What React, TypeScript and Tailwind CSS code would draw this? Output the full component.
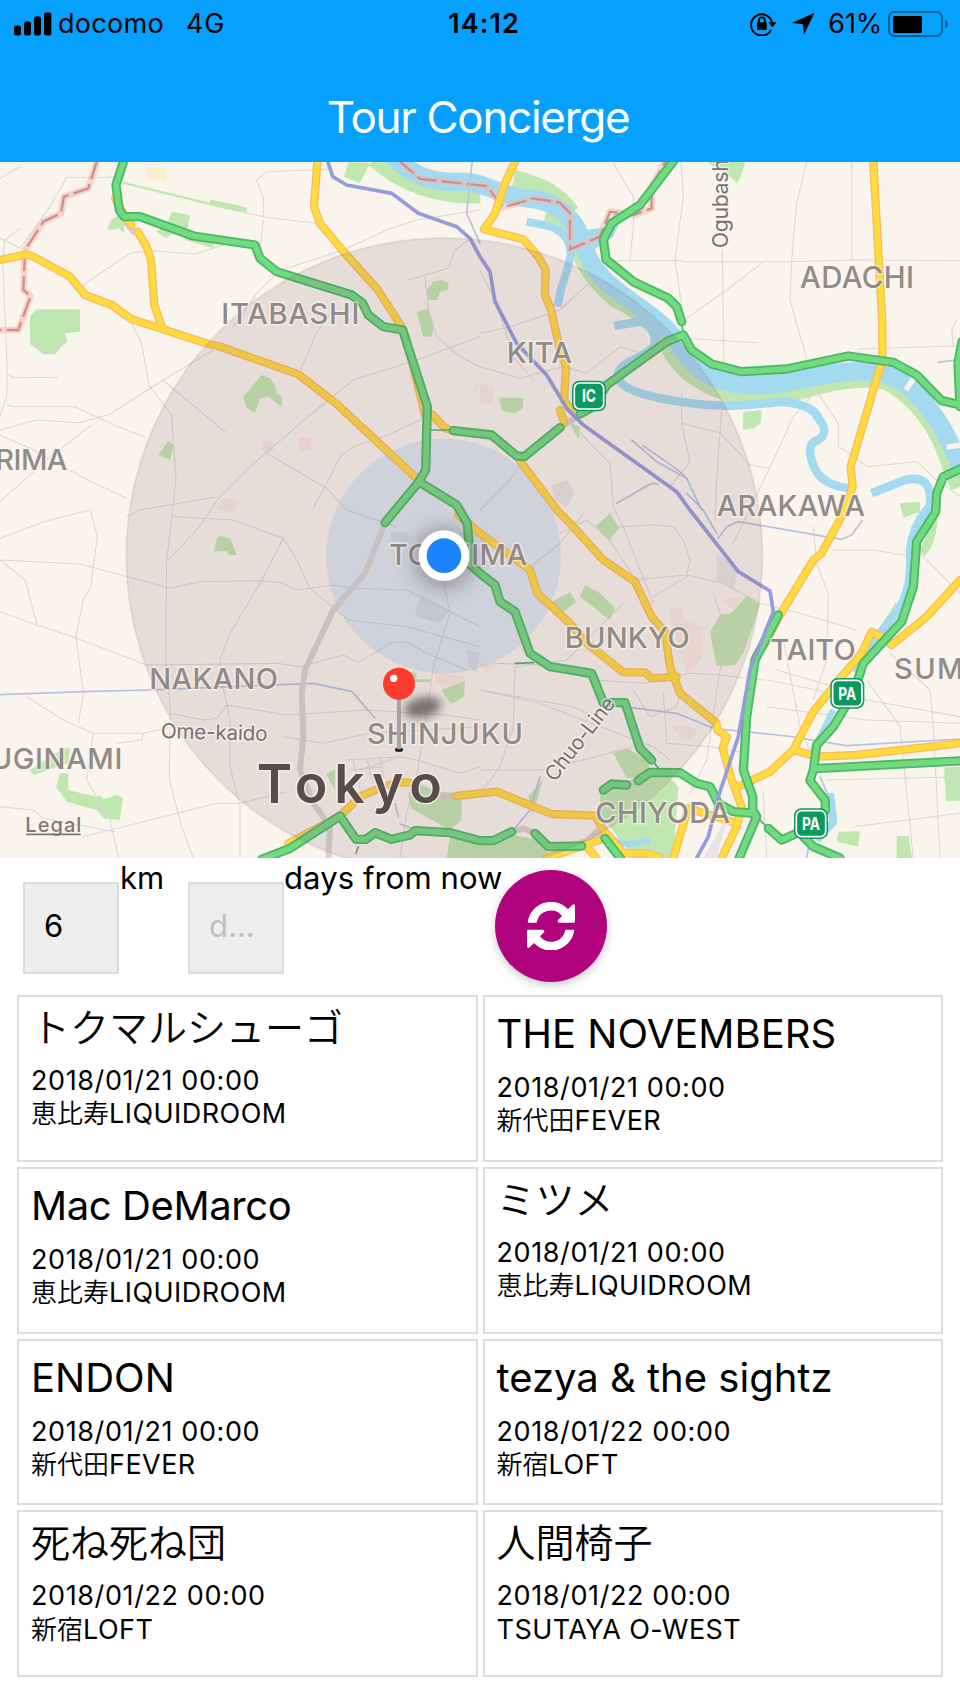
import React from "react";

const FONT = "font-[Inter,'Noto_Sans_CJK_JP',sans-serif]";

/* ---------- map geometry (three units per pixel) ---------- */

const localRoads = [
  "0,55 60,20", "0,235 60,265 150,140 200,52 350,52", "8,300 15,240 60,205", "8,300 22,640 20,710 0,770",
  "20,640 40,653 172,652", "20,735 45,740 225,740 330,790 435,832", "0,810 110,780 240,788 330,762 490,660 640,570",
  "0,1025 145,895 275,795", "0,825 90,865 180,915 275,965 380,1015", "250,375 390,280 455,272 585,282 680,252",
  "390,480 425,550 447,675 515,765 528,960 518,1050 500,1200 497,1500 510,1640 508,1860 545,2000 580,2094",
  "488,660 678,818", "860,325 1030,270 1160,210 1250,180 1440,150", "790,180 782,255", "790,170 790,115 770,60 800,35 1000,28",
  "590,125 800,172 950,190", "820,350 770,400 700,500", "900,635 950,515 1010,440", "660,1010 750,920 930,765 1060,660 1250,600 1440,530",
  "1225,360 1345,325 1365,270 1405,240", "1275,350 1285,450 1310,530 1380,590 1440,620", "1280,770 1175,820 1060,860 1020,890 980,970 940,1045",
  "800,880 980,985 1040,1050 1190,1100", "660,1010 590,1110 505,1200", "650,1010 420,1050 380,1070", "270,1050 292,1130 272,1280 250,1320 228,1430 250,1600 235,1690",
  "0,1135 130,1085 270,1050", "0,1200 240,1212 510,1285 600,1265 780,1262 845,1268 890,1290 1000,1275 1060,1285 1220,1290 1440,1400",
  "0,1355 110,1395 230,1435 440,1515 830,1510 900,1520 1030,1485 1075,1508 1170,1450 1220,1445 1280,1480 1400,1530", "110,1390 75,1260 0,1200",
  "850,1135 780,1270 690,1420 660,1500 665,1560 690,1680 690,1820 720,1940 720,2094", "520,1070 700,1080 850,1135 890,1200 930,1285 1045,1380 1220,1400 1440,1460",
  "80,1610 190,1680 280,1720 430,1720 520,1700", "510,1660 610,1680 650,1675 680,1635 860,1665 1100,1650 1340,1665 1440,1680",
  "280,1720 260,1860 330,1980 355,2094", "0,1940 100,1950 130,1975 345,2015", "250,2030 430,1985 650,1930 720,1930 860,1895", "430,1720 425,1740 350,1750",
  "850,1730 970,1750 1110,1720 1440,1700", "1330,1260 1350,1360 1300,1520 1280,1660 1250,1850 1220,1960 1200,2094", "1080,1830 1200,1790 1250,1800 1380,1840 1440,1820",
  "1060,1800 1080,1890", "1100,1795 1120,1870", "1140,1790 1150,1850", "1040,1800 1200,1790", "1050,1830 1150,1820",
  "1440,520 1530,500 1680,450 1830,310 1860,302 2040,302 2060,305 2370,305 2560,300 2880,302", "1838,6 1900,110 1900,200 1890,300", "2043,6 2050,110 2025,300 2050,470",
  "2420,6 2390,130 2375,300 2370,420 2410,560 2440,680 2515,790 2515,860 2555,885", "2555,6 2555,300", "2167,270 2172,650 2160,820 2150,960 2145,1080",
  "2060,475 2180,390 2285,310", "2050,535 2270,548", "2575,567 2860,558 2880,560", "2870,480 2855,510 2860,555", "2045,790 2160,818 2250,915 2305,925",
  "2045,700 2045,790 2070,905 2010,980 2070,1050", "2440,700 2380,770 2320,900 2200,1150", "2555,885 2600,920 2750,905 2810,960 2880,1010",
  "1440,620 1560,655 1690,620 1760,640 1860,560 1960,590", "1440,330 1490,430 1540,590 1600,660", "1700,770 1770,850 1830,910 1840,1040 1870,1100 1920,1230 1960,1330",
  "1440,1050 1530,960 1570,900", "1580,1230 1680,1150 1750,1060", "1680,1120 1760,1080 1830,1140 1900,1250", "1860,1100 1960,1095 2020,1100 2050,1140 2070,1200 2060,1250 1960,1310",
  "1900,1260 2060,1245 2170,1270 2280,1330 2400,1360 2570,1410", "2140,1300 2180,1420 2155,1560 2120,1800 2070,1900", "1550,1520 1700,1500 1800,1400 1870,1330",
  "1440,1590 1620,1630 1800,1700 1960,1760 2010,1800", "1480,1510 1640,1515 1780,1560 1930,1570 2070,1540 2160,1545 2290,1560", "1545,1520 1540,1700 1500,1820 1440,1900", "1440,1830 1620,1830 1750,1800 1900,1760",
  "2300,1560 2600,1620 2880,1670", "2300,1640 2600,1680 2880,1690", "2440,1100 2450,1210 2485,1300 2480,1500 2440,1620", "2500,1170 2620,1170 2740,1190", "2600,1560 2700,1700 2720,1900 2740,2094",
  "2670,1480 2790,1590 2800,1700 2820,2094", "2330,1530 2570,1600", "2350,1440 2400,1700 2440,1800", "2480,1860 2880,1850", "2560,2000 2880,1960", "2760,1180 2880,1300", "2290,1900 2300,2094", "1990,1600 2000,1750 2130,1760 2240,1780",
  "1900,1590 1950,1670 2030,1640 2040,1600", "1760,1660 1720,1640 1440,1590",
];

const yellowRoads = [
  "0,300 80,283 100,290 210,350 255,405 335,435 395,478 480,505 625,552 655,558 895,643 1010,732 1150,862 1255,960",
  "345,115 380,180 395,195", "413,215 440,260 453,300 463,435 485,500",
  "952,6 942,140 960,190 1035,280 1130,385 1205,500 1240,620 1275,765", "1298,765 1335,805 1360,812",
  "1545,6 1515,70 1485,160 1452,208 1570,238 1615,290 1637,330 1635,405 1653,450 1680,570 1698,620 1692,720 1715,750", "1680,750 1692,785",
  "1558,900 1675,1055 1708,1088 1810,1200 1905,1265 1955,1370 1995,1415 2010,1520 2040,1600 2150,1690 2152,1710 2180,1730 2168,1765 2195,1860 2225,1940 2210,2000 2165,2094",
  "1375,1065 1440,1120 1590,1230 1612,1300 1710,1390 1760,1450 1870,1537 1935,1537 1955,1555 2030,1550",
  "2620,6 2647,490 2647,600 2620,690 2552,920 2558,980 2535,1050 2465,1180 2440,1200 2340,1365 2290,1460",
  "2880,1260 2780,1370 2675,1455 2650,1435 2615,1415 2585,1480 2525,1550 2440,1655 2380,1770 2310,1835 2205,1885",
  "2380,1770 2450,1790 2570,1785 2880,1750", "865,2050 1020,1968 1080,1910 1125,1890", "1168,1875 1200,1867 1228,1868", "1368,1908 1490,1895 1655,1962 1785,1967 1810,2010 1870,2080 1940,2080 1980,2094",
  "1640,2094 1785,2045 1830,2030", "1750,2050 1790,2094", "2065,1945 2045,2010 2020,2094", "2065,1945 2210,1990",
];

const greenRoads = [
  "372,0 348,75 358,150 372,170 420,170 580,228 765,255 780,295 830,335 1055,405 1088,430 1105,465 1150,500 1208,510 1282,740 1277,930 1257,965 1155,1088",
  "1257,965 1370,1035 1402,1090 1412,1215 1440,1240 1485,1275 1500,1325 1545,1355 1590,1480 1650,1520 1775,1540 1810,1628 1875,1628 1920,1765 1955,1800",
  "1360,812 1475,825 1550,888 1573,890 1680,803", "1740,762 1780,740 1820,675 2000,545 2050,525 2075,570 2135,612 2225,635 2360,627 2545,588 2680,607 2750,645 2825,722 2890,736",
  "2023,0 1920,135 1835,190 1810,240 1818,298 1900,365 2005,415 2030,440 2045,485", "2886,545 2874,610 2880,740",
  "2886,925 2830,950 2810,1000 2807,1055 2750,1145 2740,1280 2705,1385 2590,1510 2560,1600 2500,1700 2450,1755 2440,1830 2430,1862 2475,1920 2477,1950 2390,2020 2345,2040 2305,2005",
  "2445,1826 2890,1802", "2335,1365 2265,1500 2240,1670 2230,1830 2258,1910 2258,1960 2270,1970 2215,2100",
  "1810,1890 1835,1872 1880,1875", "1915,1862 1950,1837 2040,1838 2090,1870 2130,1880 2155,1930 2200,1955 2265,1960",
  "785,2098 870,2065 1020,1968 1068,2038 1098,2038 1125,2018 1175,2038 1230,2025 1245,2012 1350,2018 1440,2042 1480,2042 1535,2015",
  "1605,2020 1645,2060 1745,2058", "1815,2035 1862,2096", "2410,2030 2440,2060 2520,2094",
];

const parks = [
  "90,470 110,448 240,448 240,515 195,520 203,545 188,555 165,583 130,583 90,552",
  "730,710 785,645 810,655 828,680 828,700 847,710 845,742 805,710 780,715 765,760 740,745", "515,155 570,165 562,210 540,205 500,235 468,215 500,195",
  "322,208 332,180 355,165 372,190 372,218 355,205 340,210", "555,225 640,248 640,265 555,240", "370,65 630,128 630,118 740,142 740,155 690,150 370,72",
  "1280,390 1300,365 1325,360 1345,370 1345,388 1320,395 1312,420 1285,420", "1250,455 1285,445 1302,500 1295,530 1270,530", "475,885 505,843 523,855 510,900",
  "1045,6 1110,10 1080,70 1032,50", "2120,6 2235,6 2228,35 2212,70 2190,50", "2230,755 2285,750 2282,790 2260,805 2228,810", "1498,712 1570,715 1568,745 1545,760 1505,752", "1705,785 1740,800 1738,840",
  "1788,1098 1830,1060 1858,1105 1825,1142", "1655,1325 1710,1297 1728,1325 1690,1355", "1755,1275 1800,1300 1845,1345 1830,1380 1740,1310",
  "2130,1415 2160,1365 2195,1358 2240,1307 2280,1335 2230,1480 2205,1515 2150,1518 2140,1470",
  "1800,1900 1840,1870 2000,1842 2035,1880 2020,2094 1900,2094 1800,1960", "1840,1780 1880,1765 1950,1805 1940,1855 1880,1855", "1510,2094 1440,2080 1540,2025 1620,2040 1655,2094",
  "1225,1905 1245,1865 1320,1900 1385,1920 1385,1980 1350,2010 1232,1945", "1350,2030 1440,2050 1520,2060 1500,2094 1340,2094", "642,1175 652,1130 665,1128 690,1135 710,1185 688,1186 680,1172",
  "1325,1590 1395,1562 1392,1610 1355,1632 1340,1615", "1230,1535 1250,1540 1250,1558 1290,1558 1290,1566 1230,1566", "978,1842 1005,1828 1005,1890",
  "2832,1822 2880,1820 2880,1922 2838,1924", "2690,2028 2726,2028 2736,2094 2690,2094", "2515,2015 2580,2013 2575,2060 2510,2045", "2635,1410 2690,1322 2680,1390 2640,1440",
  "1585,1910 1630,1855 1600,1960 1590,1950", "2700,1030 2760,1025 2760,1060 2745,1060 2710,1075",
  "168,1880 180,1840 205,1840 205,1890 290,1910 300,1905 310,1918 350,1905 368,1912 360,1980 310,1975 290,1950 200,1925", "90,1830 190,1765 210,1765 205,1810 100,1845",
];

const tanAreas = ["2005,1350 2045,1340 2050,1380 2110,1400 2105,1500 2060,1540 2030,1450", "2170,1320 2230,1305 2200,1350", "2015,1700 2050,1695 2090,1710 2080,1740 2050,1740", "1480,680 1478,735 1440,730 1440,672 1415,710 1425,670", "665,1015 720,1020 700,1055 650,1050", "1305,1535 1400,1550 1380,1580 1310,1570", "1440,1510 1490,1515 1460,1545"];
const greyAreas = ["1245,1350 1265,1305 1350,1350 1320,1390 1250,1370", "1655,975 1700,960 1725,1000 1700,1040 1665,1020", "2150,1180 2180,1200 2215,1230 2200,1290 2150,1260", "1400,1470 1440,1480 1430,1540 1405,1520", "1172,1115 1225,1118 1225,1145 1175,1145", "915,1870 960,1900 920,1890", "2170,1990 2180,1980 2150,2094 2110,2094"];

const boundary = [
  "292,0 265,85 192,110 183,160 130,185 75,270 70,390 92,408 55,510 0,510",
  "1195,0 1260,57 1460,78 1510,142 1600,115 1680,128 1710,160 1710,268 1800,230 1830,155 1900,165 1955,145 1955,80 1998,0",
];

const mainRiver =
  "M1180 -10 C1230 40 1290 70 1370 65 S1500 110 1580 115 C1680 120 1730 190 1745 240 C1765 300 1780 330 1830 375 C1900 435 1990 480 2030 545 C2070 620 2140 672 2240 676 C2350 680 2420 652 2500 640 C2600 625 2670 635 2720 675 C2780 725 2830 800 2860 870 L2885 930";

const waters: { d: string; w: number }[] = [
  { d: "M1580 185 L1640 197 Q1712 215 1712 285 Q1700 340 1685 380 L1672 440", w: 24 },
  { d: "M1843 497 L1920 485 Q1965 485 1965 550 Q1960 570 1900 600 Q1850 620 1855 655 Q1870 700 2040 725 Q2150 742 2240 735 L2350 725 Q2440 735 2455 775 Q2490 815 2455 840 Q2415 850 2440 915 Q2460 975 2550 985", w: 26 },
  { d: "M2615 1000 L2715 960 Q2800 940 2790 1040 Q2740 1090 2730 1170 Q2740 1300 2680 1370 L2620 1445 L2570 1540", w: 26 },
  { d: "M2500 1650 L2440 1770", w: 18 },
  { d: "M1822 2020 Q1850 2060 1900 2050 L1950 2040", w: 18 },
  { d: "M2490 1900 L2500 1985 L2450 2040", w: 24 },
];

const thinRails = [
  "0,1604 250,1595 450,1590 940,1570 1057,1595 1125,1675", "1870,1640 2030,1660 2140,1705 2360,1728 2540,1757 2880,1737", "1895,840 1970,905 2060,955 2105,1050",
  "1930,857 2040,935 2060,955", "2155,1135 2180,1100 2215,1085 2525,1138 2555,1125 2586,1083", "1850,1030 1955,970 1975,972", "1417,0 1400,160 1440,250", "2815,607 2880,598",
  "2060,1000 2110,1050 2150,1120", "1620,1850 1590,1950 1540,2010", "1185,1930 1195,1970", "1200,1992 1250,2010 1440,2035", "2460,1850 2490,1920", "2430,2040 2420,2094",
];

type Label = { t: string; x: number; y: number; len: number; size: number; w?: number; fill?: string; rot?: number };
const labels: Label[] = [
  { t: "ITABASHI", x: 664, y: 492, len: 414, size: 87 },
  { t: "KITA", x: 1520, y: 608, len: 196, size: 87 },
  { t: "ADACHI", x: 2400, y: 383, len: 342, size: 88 },
  { t: "RIMA", x: -14, y: 929, len: 216, size: 87 },
  { t: "ARAKAWA", x: 2150, y: 1068, len: 445, size: 87 },
  { t: "TOSHIMA", x: 1167, y: 1215, len: 414, size: 87 },
  { t: "BUNKYO", x: 1694, y: 1463, len: 375, size: 87 },
  { t: "TAITO", x: 2311, y: 1499, len: 256, size: 87 },
  { t: "SUMIDA", x: 2682, y: 1556, len: 366, size: 87 },
  { t: "NAKANO", x: 448, y: 1587, len: 386, size: 87 },
  { t: "SHINJUKU", x: 1101, y: 1751, len: 468, size: 87 },
  { t: "UGINAMI", x: -28, y: 1826, len: 395, size: 87 },
  { t: "CHIYODA", x: 1786, y: 1988, len: 404, size: 87 },
  { t: "Tokyo", x: 770, y: 1928, len: 556, size: 161, w: 600, fill: "#584d4b" },
  { t: "Ogubashi", x: 2183, y: 265, len: 282, size: 64, w: 400, fill: "#77726e", rot: -90 },
  { t: "Chuo-Line", x: 1664, y: 1868, len: 300, size: 62, w: 400, fill: "#77706f", rot: -52 },
  { t: "Ome-kaido", x: 482, y: 1734, len: 320, size: 62, w: 400, fill: "#77706f", rot: 1.5 },
];

function Lines({ data, stroke, width }: { data: string[]; stroke: string; width: number }) {
  return (
    <g fill="none" stroke={stroke} strokeWidth={width} strokeLinejoin="round" strokeLinecap="round">
      {data.map((p, i) => <polyline key={i} points={p} />)}
    </g>
  );
}

function Shield({ x, y, text }: { x: number; y: number; text: string }) {
  return (
    <g>
      <rect x={x} y={y} width="102" height="92" rx="22" fill="#0d9a5e" />
      <rect x={x + 7} y={y + 7} width="88" height="78" rx="16" fill="#0d9a5e" stroke="#fff" strokeWidth="5" />
      <text x={x + 51} y={y + 65} textAnchor="middle" fontSize="54" fontWeight="700" textLength={text === "IC" ? 42 : 54} lengthAdjust="spacingAndGlyphs" fill="#fff">{text}</text>
    </g>
  );
}

function TourMap() {
  return (
    <svg viewBox="0 6 2880 2088" className={`block h-[696px] w-full shrink-0 ${FONT}`}>
      <defs>
        <filter id="pinShadow" x="-50%" y="-80%" width="200%" height="260%"><feGaussianBlur stdDeviation="14" /></filter>
        <filter id="dotShadow" x="-50%" y="-50%" width="200%" height="200%"><feGaussianBlur stdDeviation="28" /></filter>
      </defs>
      <rect x="0" y="0" width="2880" height="2100" fill="#f9f5ec" />
      <polygon points="440,20 500,25 500,62 442,55" fill="#fbeecb" />
      {tanAreas.map((p, i) => <polygon key={i} points={p} fill="#f8e9dc" />)}
      {greyAreas.map((p, i) => <polygon key={i} points={p} fill="#e9e4e1" />)}
      <path d="M790 845 l28 -5 l5 30 l-22 15 l-14 -15z M895 835 l35 -4 l5 38 l-38 6z" fill="#fbe5e4" />
      <g fill="#c1e7b0">{parks.map((p, i) => <polygon key={i} points={p} />)}</g>
      <g fill="none" stroke="#c1e7b0">
        <path d="M1130 -10 C1210 60 1310 100 1440 95" strokeWidth="70" />
        <path d="M1540 60 Q1660 85 1710 160" strokeWidth="60" />
        <path d="M1640 155 Q1720 180 1740 270 Q1770 350 1850 415 Q1950 460 2010 560 Q2050 650 2180 695 Q2300 710 2400 690 Q2560 640 2660 660 Q2770 720 2830 850 L2880 980" strokeWidth="58" />
        <path d="M2180 640 Q2260 665 2400 645 T2600 612" strokeWidth="20" />
        <path d="M2800 1060 Q2800 1140 2765 1180" strokeWidth="26" />
      </g>
      <Lines data={localRoads} stroke="#dbd8d2" width={3.2} />
      <path d={mainRiver} fill="none" stroke="#a3daef" strokeWidth="55" />
      {waters.map((r, i) => <path key={i} d={r.d} fill="none" stroke="#a3daef" strokeWidth={r.w} strokeLinejoin="round" />)}
      <path d="M1760 210 l60 -10 l30 -50 l15 20 l-25 60 l-60 40z" fill="#a3daef" />
      <path d="M2718 690 l22 -34 M2840 862 l45 -8" stroke="#f9f5ec" strokeWidth="16" />
      <g opacity="0.55"><Lines data={boundary} stroke="#f5b8ae" width={20} /></g>
      <g fill="none" stroke="#d28f89" strokeWidth="7" strokeDasharray="60 16">
        {boundary.map((p, i) => <polyline key={i} points={p} />)}
      </g>
      <Lines data={thinRails} stroke="#b3c4e0" width={5} />
      <circle cx="1331" cy="1188" r="352" fill="#50a7fb" fillOpacity="0.16" />
      <Lines data={["1155,1088 1095,1240 1000,1350 915,1530 905,1600 910,1730 900,1830 940,1930 990,2000 985,2094"]} stroke="#d8d3ce" width={18} />
      <Lines data={["380,190 400,215", "1680,803 1740,765", "1880,1875 1915,1860", "1535,2015 1570,2005 1605,2020", "1745,2058 1790,2015 1815,2035", "1320,1905 1368,1908"]} stroke="#d6d0cb" width={18} />
      <Lines data={yellowRoads} stroke="#fbba66" width={25} />
      <Lines data={yellowRoads} stroke="#ffdb3c" width={17} />
      <Lines data={["1285,810 1360,810", "1955,1800 1980,1830", "2270,1970 2305,2005", "1068,2080 1075,2060", "2045,485 2050,525", "1545,1510 1600,1508"]} stroke="#4cb573" width={5} />
      <Lines data={greenRoads} stroke="#4ab868" width={28} />
      <Lines data={greenRoads} stroke="#72da7f" width={17} />
      <Lines data={["982,0 998,50 1040,75 1175,100 1255,160 1370,200 1410,235 1440,290 1470,335 1485,425 1550,550 1640,645 1700,745 1750,795 2030,995 2070,1050 2215,1235 2310,1293 2320,1355 2250,1530 2215,1730 2155,1910 2125,2030 2090,2094"]} stroke="#969cdb" width={11} />
      <circle cx="1333" cy="1188" r="954" fill="#825a6b" fillOpacity="0.15" stroke="#825a6b" strokeOpacity="0.12" strokeWidth="6" />
      {labels.map((l) => (
        <text
          key={l.t}
          x={l.x}
          y={l.y}
          fontSize={l.size}
          fontWeight={l.w ?? 500}
          textLength={l.len}
          fill={l.fill ?? "#918b88"}
          stroke="#fbf8f3"
          strokeOpacity="0.6"
          strokeWidth="9"
          strokeLinejoin="round"
          paintOrder="stroke"
          transform={l.rot ? `rotate(${l.rot} ${l.x} ${l.y})` : undefined}
        >
          {l.t}
        </text>
      ))}
      <Shield x={1716} y={662} text="IC" />
      <Shield x={2491} y={1554} text="PA" />
      <Shield x={2382} y={1945} text="PA" />
      <text x="76" y="2017" fontSize="60" fontWeight="500" textLength="168" fill="#7d7874">Legal</text>
      <path d="M78 2023 H242" stroke="#7d7874" strokeWidth="5" />
      <circle cx="1331" cy="1195" r="92" fill="#444" opacity="0.4" filter="url(#dotShadow)" />
      <circle cx="1332" cy="1187" r="76" fill="#fff" />
      <circle cx="1332" cy="1187" r="52" fill="#1a84fd" />
      <ellipse cx="1268" cy="1642" rx="56" ry="30" transform="rotate(-12 1268 1642)" fill="#444" opacity="0.7" filter="url(#pinShadow)" />
      <rect x="1185" y="1763" width="24" height="12" rx="6" fill="#111" />
      <rect x="1191" y="1610" width="12" height="158" fill="#a5a3a4" />
      <circle cx="1197" cy="1571" r="48" fill="#fe3b2f" />
      <circle cx="1181" cy="1555" r="11" fill="#fff" />
    </svg>
  );
}

function Header() {
  return (
    <header className="flex h-[162px] shrink-0 flex-col bg-[#06a0ff]">
      <div className="grid h-12 grid-cols-[1fr_auto_1fr] items-center pr-3 pl-[14px] text-[27px] text-black">
        <div className="flex items-center">
          <svg viewBox="0 0 38 24" className="h-6 w-[38px]">
            <rect x="0" y="13.5" width="7" height="10" rx="2" />
            <rect x="10" y="9.5" width="7" height="14" rx="2" />
            <rect x="20" y="4.5" width="7" height="19" rx="2" />
            <rect x="30" y="0.5" width="7.3" height="23" rx="2" />
          </svg>
          <span className="ml-[6px] tracking-[0.3px]">docomo</span>
          <span className="ml-[22px] tracking-[0.8px]">4G</span>
        </div>
        <span className="ml-[6px] font-semibold tracking-[1.1px]">14:12</span>
        <div className="flex items-center justify-end">
          <svg viewBox="0 0 27 24" className="h-6 w-[27px]" fill="none" stroke="#000">
            <path d="M21 18 A10.6 10.6 0 1 1 22.1 11" strokeWidth="1.9" />
            <path d="M18.3 10.3 H26.5 L22.4 15.2z" fill="#000" stroke="none" />
            <rect x="7.1" y="10.3" width="9.6" height="7.8" rx="1" fill="#000" stroke="none" />
            <path d="M8.9 11 V8.3 a3 3 0 0 1 6 0 V11" strokeWidth="1.8" />
          </svg>
          <svg viewBox="0 0 24 24" className="ml-[14px] h-6 w-6"><path d="M23.5 0.8 L12.9 23 L12 12.2 L1 11z" /></svg>
          <span className="ml-[13px] tracking-[-0.2px]">61%</span>
          <svg viewBox="0 0 60 26" className="ml-[6px] h-[26px] w-[60px]">
            <rect x="1" y="1" width="53" height="24" rx="5.5" fill="none" stroke="#06629a" strokeWidth="2" />
            <rect x="5" y="5" width="29" height="17" rx="1.5" />
            <path d="M57 8.5 q3 1.5 3 4.5 t-3 4.5z" fill="#06629a" />
          </svg>
        </div>
      </div>
      <h1 className="mt-[45px] pr-1 text-center text-[44px] leading-[48px] tracking-[-1.3px] text-white">Tour Concierge</h1>
    </header>
  );
}

function RefreshIcon() {
  const half = "M2 62 A70 70 0 0 1 123 22 L136 9 Q143 4 144 12 V58 Q144 62 140 62 H96 Q90 60 93 54 L105 42 A43 43 0 0 0 29 62z";
  return (
    <svg viewBox="0 0 144 144" className="size-12" fill="currentColor">
      <path d={half} />
      <path d={half} transform="rotate(180 72 72.5)" />
    </svg>
  );
}

function SearchForm() {
  return (
    <form className="flex h-[137px] shrink-0 items-start pl-[23px] text-[31px] leading-[36px]">
      <div className="mt-6 flex h-[92px] w-24 items-center border-2 border-[#dcdcdc] bg-[#eee] pb-1 pl-[19px]">6</div>
      <span className="mt-[2px] ml-px w-[68px]">km</span>
      <div className="mt-6 flex h-[92px] w-24 items-center border-2 border-[#dcdcdc] bg-[#eee] pb-1 pl-[19px] text-[#bfbfc4]">d...</div>
      <span className="mt-[2px] w-[211px] tracking-[0.1px] whitespace-nowrap">days from now</span>
      <button type="button" className="mt-3 flex size-[112px] items-center justify-center rounded-full bg-[#b0037d] text-white shadow-[0_3px_10px_rgba(0,0,0,0.22)]">
        <RefreshIcon />
      </button>
    </form>
  );
}

const shows = [
  { artist: "トクマルシューゴ", date: "2018/01/21 00:00", place: "恵比寿", hall: "LIQUIDROOM", ja: true },
  { artist: "THE NOVEMBERS", date: "2018/01/21 00:00", place: "新代田", hall: "FEVER" },
  { artist: "Mac DeMarco", date: "2018/01/21 00:00", place: "恵比寿", hall: "LIQUIDROOM", tight: true },
  { artist: "ミツメ", date: "2018/01/21 00:00", place: "恵比寿", hall: "LIQUIDROOM", ja: true },
  { artist: "ENDON", date: "2018/01/21 00:00", place: "新代田", hall: "FEVER" },
  { artist: "tezya & the sightz", date: "2018/01/22 00:00", place: "新宿", hall: "LOFT" },
  { artist: "死ね死ね団", date: "2018/01/22 00:00", place: "新宿", hall: "LOFT", ja: true },
  { artist: "人間椅子", date: "2018/01/22 00:00", place: "", hall: "TSUTAYA O-WEST", ja: true },
];

export default function App() {
  return (
    <div className={`flex h-[1707px] w-[960px] flex-col overflow-hidden bg-white text-black ${FONT}`}>
      <Header />
      <TourMap />
      <SearchForm />
      <main className="mr-[17px] ml-[17px] grid h-[682px] grid-cols-2 grid-rows-4 gap-[5px]">
        {shows.map((s) => (
          <article key={s.artist} className="border-2 border-[#dcdcdc] px-3 pt-[13px]">
            {s.ja ? (
              <h2 className="-mt-[3px] mb-4 text-[39px] leading-[41px] font-[350]">{s.artist}</h2>
            ) : (
              <h2 className={`mb-[13px] text-[40px] leading-[48px] ${s.tight ? "tracking-[-0.4px]" : ""}`}>{s.artist}</h2>
            )}
            <p className="text-[27px] leading-[33.4px] tracking-[0.6px]">{s.date}</p>
            <p className="text-[27px] leading-[33.4px] tracking-[0.45px]">
              <span className="text-[26px] font-[350] tracking-normal">{s.place}</span>
              {s.hall}
            </p>
          </article>
        ))}
      </main>
    </div>
  );
}
